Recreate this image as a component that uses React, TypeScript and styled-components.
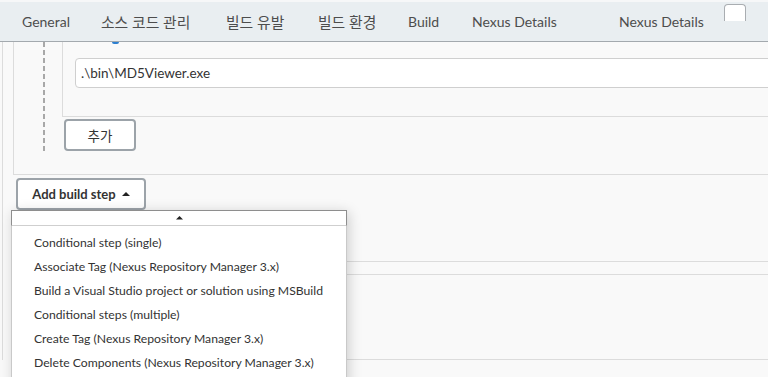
import styled, { createGlobalStyle } from 'styled-components';

const GlobalStyle = createGlobalStyle`
  html, body {
    margin: 0;
    padding: 0;
    overflow: hidden;
    background: #f9f9f9;
    font-family: "Segoe UI", Lato, "Noto Sans CJK KR", sans-serif;
    color: #333;
  }
`;

const Page = styled.div`
  height: 377px;
  overflow: hidden;
`;

const TabBar = styled.nav`
  position: relative;
  z-index: 2;
  display: flex;
  align-items: center;
  height: 39px;
  padding-left: 22px;
  border-top: 2px solid #f6f7f8;
  border-bottom: 1px solid #a3a9ae;
  background: #e9eef1;
`;

const Tab = styled.span<{ $w: number; $ko?: boolean }>`
  flex: none;
  width: ${(p) => p.$w}px;
  font-size: ${(p) => (p.$ko ? 14.8 : 14)}px;
  color: #4d4d4d;
  white-space: nowrap;
`;

const TabCheck = styled.span`
  align-self: flex-start;
  margin-top: 2px;
  width: 20px;
  height: 16px;
  border: 1px solid #a9adb1;
  border-bottom: none;
  border-radius: 4px 4px 0 0;
  background: #fff;
`;

const Body = styled.main`
  margin-left: 2px;
  border-left: 1px solid #dcdcdc;
  padding-left: 10px;
`;

const Section = styled.section`
  border-left: 1px solid #dcdcdc;
  border-bottom: 1px solid #dcdcdc;
  padding: 0 0 23px 29px;
`;

const DashedColumn = styled.div`
  display: flex;
  flex-direction: column;
  padding-left: 19px;
  background-image: repeating-linear-gradient(to bottom, #a8a8a8 0 5px, transparent 5px 8px);
  background-size: 2px 110px;
  background-repeat: no-repeat;
`;

const InnerBox = styled.div`
  display: flex;
  flex-direction: column;
  border-left: 1px solid #dcdcdc;
  border-bottom: 1px solid #dcdcdc;
  padding: 0 0 28px 12px;
`;

const HelpDot = styled.span`
  display: block;
  margin-left: 37px;
  width: 7px;
  height: 2px;
  border-radius: 0 0 4px 4px;
  background: #2d7fd0;
`;

const PathInput = styled.div`
  margin-top: 14px;
  margin-right: -20px;
  height: 28px;
  display: flex;
  align-items: center;
  padding-left: 5px;
  border: 1px solid #cfcfcf;
  border-radius: 4px;
  background: #fff;
  font-size: 13.5px;
  color: #333;
`;

const OutlineButton = styled.button<{ $w: number; $bold?: boolean }>`
  display: inline-flex;
  align-items: center;
  justify-content: center;
  gap: 6px;
  width: ${(p) => p.$w}px;
  height: 32px;
  padding: 0;
  border: 2px solid #9ca3a9;
  border-radius: 4px;
  background: #fff;
  font-family: inherit;
  font-size: 13px;
  font-weight: ${(p) => (p.$bold ? 700 : 400)};
  color: #333;
`;

const AddButton = styled(OutlineButton)`
  margin: 2px 0 0 2px;
  font-size: 13.5px;
`;

const StepArea = styled.div`
  position: relative;
  margin: 3px 0 0 3px;
  width: 130px;
`;

const Menu = styled.div`
  position: absolute;
  top: 100%;
  left: -5px;
  z-index: 3;
  width: 334px;
  height: 200px;
  background: #fff;
  border: 1px solid #c9c9c9;
  border-top: none;
  box-shadow: 2px 2px 12px rgba(0, 0, 0, 0.18);
`;

const MenuHeader = styled.div`
  display: flex;
  align-items: center;
  justify-content: center;
  height: 14px;
  margin: 0 -1px;
  border: 1px solid #8e8e8e;
  border-bottom-color: #cfcfcf;
  background: #fff;
`;

const MenuList = styled.ul`
  list-style: none;
  margin: 0;
  padding: 5px 0 0;
`;

const MenuItem = styled.li`
  height: 24px;
  line-height: 24px;
  padding-left: 22px;
  font-size: 12.2px;
  color: #333;
  white-space: nowrap;
`;

const Block = styled.div<{ $h: number }>`
  height: ${(p) => p.$h}px;
  border-bottom: 1px solid #dcdcdc;
`;

const Caret = ({ size = 8 }: { size?: number }) => (
  <svg width={size} height={size / 2} viewBox="0 0 8 4">
    <path d="M0 4 L4 0 L8 4 Z" fill="#222" />
  </svg>
);

const tabs: { label: string; w: number; ko?: boolean }[] = [
  { label: 'General', w: 79 },
  { label: '소스 코드 관리', w: 125, ko: true },
  { label: '빌드 유발', w: 92, ko: true },
  { label: '빌드 환경', w: 90, ko: true },
  { label: 'Build', w: 64 },
  { label: 'Nexus Details', w: 147 },
  { label: 'Nexus Details', w: 105 },
];

const menuItems = [
  'Conditional step (single)',
  'Associate Tag (Nexus Repository Manager 3.x)',
  'Build a Visual Studio project or solution using MSBuild',
  'Conditional steps (multiple)',
  'Create Tag (Nexus Repository Manager 3.x)',
  'Delete Components (Nexus Repository Manager 3.x)',
];

export default function App() {
  return (
    <Page>
      <GlobalStyle />
      <TabBar>
        {tabs.map((t, i) => (
          <Tab key={i} $w={t.w} $ko={t.ko}>
            {t.label}
          </Tab>
        ))}
        <TabCheck />
      </TabBar>
      <Body>
        <Section>
          <DashedColumn>
            <InnerBox>
              <HelpDot />
              <PathInput>.\bin\MD5Viewer.exe</PathInput>
            </InnerBox>
            <div>
              <AddButton $w={72}>추가</AddButton>
            </div>
          </DashedColumn>
        </Section>
        <StepArea>
          <OutlineButton $w={130} $bold>
            Add build step <Caret />
          </OutlineButton>
          <Menu>
            <MenuHeader>
              <Caret size={7} />
            </MenuHeader>
            <MenuList>
              {menuItems.map((item) => (
                <MenuItem key={item}>{item}</MenuItem>
              ))}
            </MenuList>
          </Menu>
        </StepArea>
        <Block $h={51} />
        <Block $h={12} />
        <Block $h={84} />
      </Body>
    </Page>
  );
}
